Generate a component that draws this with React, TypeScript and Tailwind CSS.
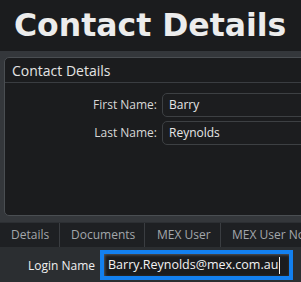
import React from 'react';

const tabs = ['Details', 'Documents', 'MEX User', 'MEX User Notes'];

const Field: React.FC<{ label: string; value: string }> = ({ label, value }) => (
    <div className="flex items-center h-[24px]">
        <div className="w-[157px] pr-[5px] text-right text-[12px] text-[#d8d8d8]">{label}</div>
        <div className="flex-1 h-[24px] -mr-[20px] rounded-[5px] border border-[#3d4043] bg-[#1c1d1f] pl-[6px] flex items-center text-[12px] text-[#e6e6e6]">
            {value}
        </div>
    </div>
);

const App: React.FC = () => {
    return (
        <div className="w-[301px] h-[282px] overflow-hidden bg-[#1b1c1e] flex flex-col" style={{ fontFamily: '"Open Sans", "Noto Sans", sans-serif' }}>
            {/* page title */}
            <div className="h-[51px] shrink-0 pl-[14px] flex items-center">
                <h1 className="text-[31.5px] font-bold text-[#ececec] leading-none whitespace-nowrap" style={{ fontFamily: '"DejaVu Sans", Verdana, sans-serif' }}>
                    Contact Details
                </h1>
            </div>

            {/* group box */}
            <div className="h-[171px] shrink-0 bg-[#34373b] pt-[6px] pl-[4px] pb-[6px] flex flex-col">
                <div className="flex-1 -mr-[10px] rounded-[5px] border border-[#4a4e52] bg-[#1b1c1e] flex flex-col">
                    <div className="h-[25px] border-b border-[#3a3d41] pl-[7px] flex items-center text-[14px] text-[#e4e4e4]">
                        Contact Details
                    </div>
                    <div className="pt-[10px] flex flex-col gap-[4px]">
                        <Field label="First Name:" value="Barry" />
                        <Field label="Last Name:" value="Reynolds" />
                    </div>
                </div>
            </div>

            {/* tabs */}
            <div className="h-[25px] shrink-0 bg-[#1e2023] border-t border-[#2c2f33] flex overflow-hidden text-[12px] text-[#a3a7ab] whitespace-nowrap">
                {tabs.map((t, i) => (
                    <div
                        key={t}
                        className={
                            'h-full shrink-0 flex items-center border-r border-[#3a3d41] ' +
                            (i === 0 ? 'w-[60px] pl-[11px]' : i === 1 ? 'w-[85px] pl-[11px]' : i === 2 ? 'w-[76px] pl-[12px]' : 'w-[120px] pl-[11px]')
                        }
                    >
                        {t}
                    </div>
                ))}
            </div>

            {/* login row */}
            <div className="flex-1 bg-[#2b2e31] flex items-start pt-[3px]">
                <div className="w-[100px] pr-[5px] pt-[7px] text-right text-[12px] font-medium text-[#f0f0f0]">Login Name</div>
                <div className="w-[193px] h-[30px] border-[4px] border-[#1380ef] bg-[#1b1c1e] shadow-[inset_1px_1px_3px_#55595e] flex items-center pl-[4px] text-[12.5px] text-[#f2f2f2]">
                    Barry.Reynolds@mex.com.au
                    <span className="ml-[1px] w-[1px] h-[17px] bg-[#f2f2f2]" />
                </div>
            </div>
        </div>
    );
};

export default App;
